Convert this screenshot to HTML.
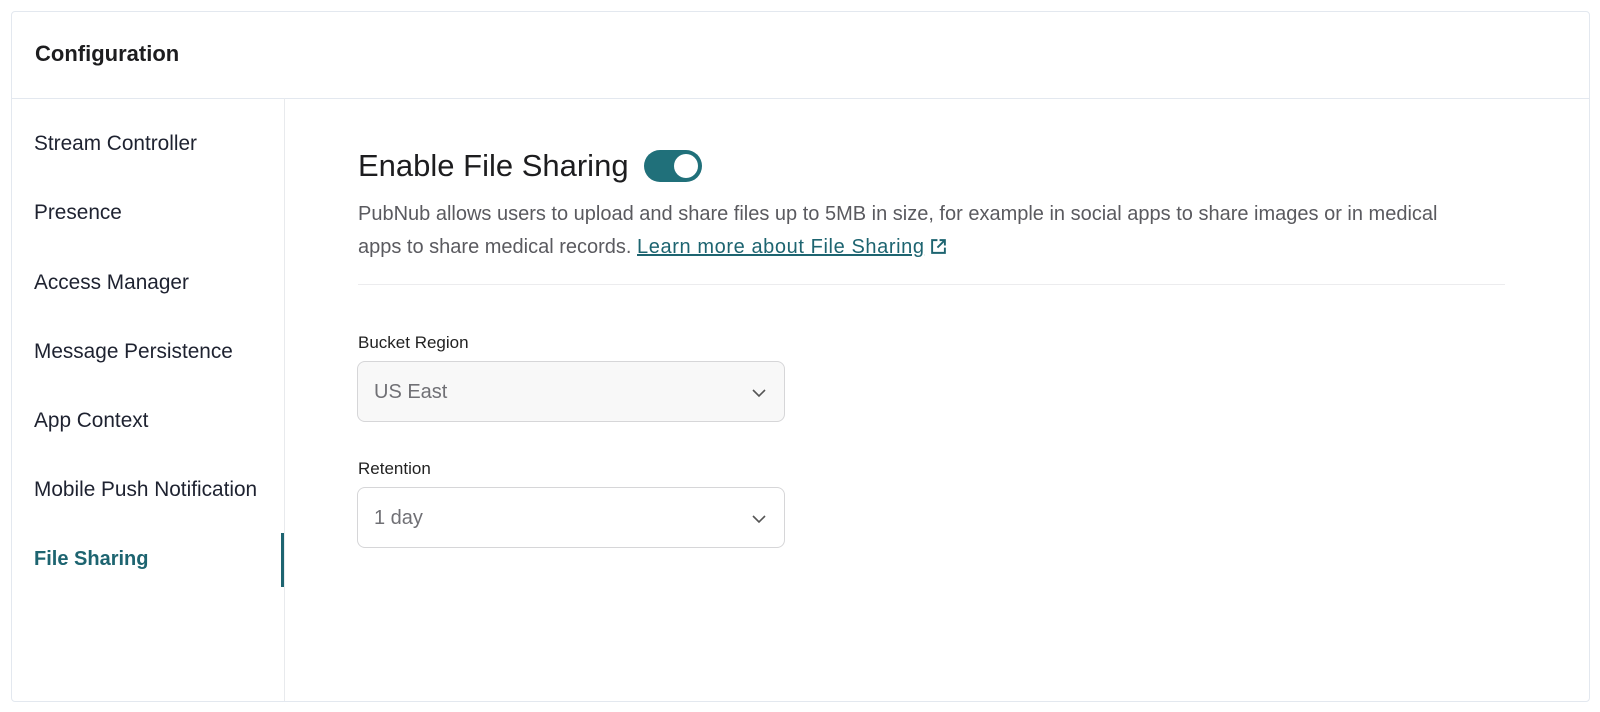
<!DOCTYPE html>
<html><head><style>
body{margin:0;background:#fff;font-family:"Liberation Sans",sans-serif;width:1600px;height:712px;overflow:hidden;position:relative}
.card{position:absolute;left:11px;top:11px;width:1579px;height:691px;border:1px solid #e3e8ef;border-radius:4px;box-sizing:border-box}
.hdr{position:absolute;left:0;top:0;right:0;height:86px;border-bottom:1px solid #e3e8ef}
.hdr span{position:absolute;left:23px;top:29px;font-size:22px;font-weight:bold;color:#1d1d1f}
.side{position:absolute;left:0;top:86px;width:272px;bottom:0;border-right:1px solid #e8eaed}
.t{position:absolute;font-size:20.8px;color:#1e2230;line-height:24px;white-space:nowrap}
.act{color:#1d6470;font-weight:bold;font-size:20px}
.bar{position:absolute;left:281px;top:533px;width:3px;height:54px;background:#1d6470}
h1{position:absolute;left:358px;top:146px;margin:0;font-weight:normal;font-size:31px;line-height:40px;color:#1d1d1f;white-space:nowrap}
.tog{position:absolute;left:644px;top:150px;width:58px;height:32px;border-radius:16px;background:#20707a}
.tog:after{content:"";position:absolute;right:4px;top:4px;width:24px;height:24px;border-radius:50%;background:#fff}
p{position:absolute;left:358px;top:198px;margin:0;font-size:20px;line-height:33px;color:#5a5a5f;white-space:nowrap}
a{color:#1d6470;text-decoration:underline;letter-spacing:0.6px}
.hr{position:absolute;left:358px;top:284px;width:1147px;height:1px;background:#ececee}
.lbl{position:absolute;left:358px;font-size:17px;color:#222;line-height:20px}
.sel{position:absolute;left:357px;width:428px;height:61px;border:1px solid #d6d6d8;border-radius:8px;box-sizing:border-box}
.sel span{position:absolute;left:16px;top:18px;font-size:20px;color:#707075;line-height:24px}
.sel svg{position:absolute;right:18px;top:27px}
</style></head><body>
<div class="card">
<div class="hdr"><span>Configuration</span></div>
<div class="side"></div>
</div>
<div class="t" style="left:34px;top:132px">Stream Controller</div>
<div class="t" style="left:34px;top:201px">Presence</div>
<div class="t" style="left:34px;top:271px">Access Manager</div>
<div class="t" style="left:34px;top:340px">Message Persistence</div>
<div class="t" style="left:34px;top:409px">App Context</div>
<div class="t" style="left:34px;top:478px">Mobile Push Notification</div>
<div class="t act" style="left:34px;top:547px">File Sharing</div>
<div class="bar"></div>
<h1>Enable File Sharing</h1><div class="tog"></div>
<p>PubNub allows users to upload and share files up to 5MB in size, for example in social apps to share images or in medical<br>apps to share medical records. <a>Learn more about File Sharing</a> <svg width="17" height="17" viewBox="0 0 16 16" style="vertical-align:-2px"><path d="M7 2H2v12h12V9M9 2h5v5M14 2L7 9" fill="none" stroke="#1d6470" stroke-width="1.8"/></svg></p>
<div class="hr"></div>
<div class="lbl" style="top:333px">Bucket Region</div>
<div class="sel" style="top:361px;background:#f8f8f8"><span>US East</span><svg width="14" height="9" viewBox="0 0 14 9"><path d="M1 1l6 6 6-6" fill="none" stroke="#555" stroke-width="1.6"/></svg></div>
<div class="lbl" style="top:459px">Retention</div>
<div class="sel" style="top:487px"><span>1 day</span><svg width="14" height="9" viewBox="0 0 14 9"><path d="M1 1l6 6 6-6" fill="none" stroke="#555" stroke-width="1.6"/></svg></div>
</body></html>
